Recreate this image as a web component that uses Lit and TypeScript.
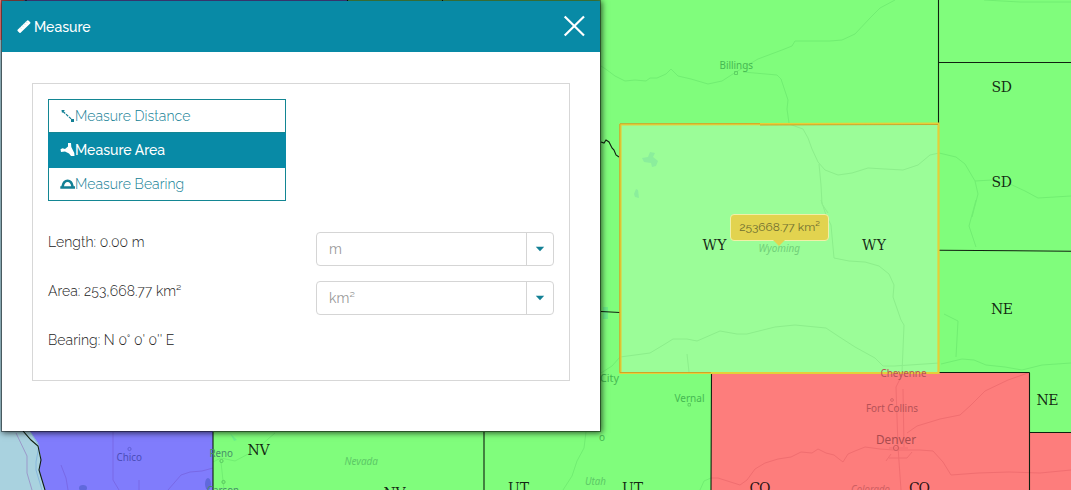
import { LitElement, html, css, svg } from "lit";
import { customElement } from "lit/decorators.js";

type Label = [text: string, x: number, y: number, width: number];

const STATES: Label[] = [
  ["SD", 991.5, 92, 20.5], ["SD", 991.5, 186.5, 20.5], ["WY", 702.5, 250.3, 24], ["WY", 862, 250.3, 24],
  ["NE", 991, 314, 22], ["NE", 1036.5, 405.3, 22], ["NV", 247.5, 455.3, 22], ["NV", 383.5, 498, 22],
  ["UT", 508, 492.5, 21], ["UT", 622, 492.5, 21], ["CO", 749.5, 493, 21], ["CO", 909, 493, 21],
];

@customElement("map-canvas")
export class MapCanvas extends LitElement {
  static styles = css`
    :host { display: block; }
    svg { display: block; }
    .state { font: 14px "DejaVu Serif", serif; fill: #000; fill-opacity: .85; }
    .town { font-family: "Noto Sans", sans-serif; font-size: 11px; }
    .green { fill: #46b852; }
    .blue { fill: #4a4cb8; }
    .red { fill: #b65257; }
    .mixed { fill: #458f68; }
    .region { font-style: italic; font-size: 10px; fill: #5cc966; }
    .region-light { fill: #72cf78; }
    .region-red { fill: #cf5f63; }
    .big { font-size: 12.5px; fill: #a94b4f; }
    .road { fill: none; stroke: #71ee72; stroke-width: 1; }
    .road-light { fill: none; stroke: #8cee8b; stroke-width: 1; }
    .road-red { fill: none; stroke: #f06e70; stroke-width: 1; }
    .road-blue { fill: none; stroke: #7869e6; stroke-width: 1; }
    .edge { fill: none; stroke: #102010; stroke-width: 1.1; }
  `;

  private town(cls: string, [t, x, y, w]: Label) {
    return svg`<text class="town ${cls}" x=${x} y=${y} textLength=${w} lengthAdjust="spacingAndGlyphs">${t}</text>`;
  }

  render() {
    return html`<svg width="1071" height="490" viewBox="0 0 1071 490">
      <rect width="1071" height="490" fill="#80fd7c" />
      <rect width="348" height="40" fill="#807cfc" />
      <rect width="24" height="40" fill="#fd7d7c" />
      <path d="M0 40H30V420H0Z" fill="#a9d2df" />
      <path d="M0 420H213V490H0Z" fill="#807cfc" />
      <path d="M0 420H24L31 433L38 443L41 458L39 470L45 490H0Z" fill="#a9d2df" />
      <path d="M711.5 373H1029.5V432.5H1071V490H711Z" fill="#fd7d7c" />
      <rect x="620" y="124" width="319" height="249" fill="#9bfd98" />

      <path class="road" d="M601 66L607 70L615 76L625 81L635 80L646 81L650 78L657 78L666 74L671 69L678 76L691 79L708 84L722 81L736 72L758 59L782 50L792 46L795 41H830L842 40L855 34L870 18L880 8L895 0M743 72L777 75L781 79L785 91L788 100L787 109L789 123M939 153L956 157L965 164L975 181L992 180L1010 184L1025 191L1038 198L1071 196M975 181L978 194L972 217M976 200L969 226L976 247M601 373L612 366L620 357M941 364L962 359L974 360L986 365L1005 367L1022 370L1042 365L1071 363M944 314L958 321L956 357M586 432L584 448L577 461L572 476L563 490M711 478L704 481L700 490M213 462L221 458L235 461L250 453L260 446L275 433M221 462L224 490M984 0L1020 2H1071" />
      <path class="road-light" d="M789 124L803 129L808 138L812 149L818 162L825 170L838 175L852 173L868 168L885 169L903 170L918 165L930 155L939 153M819 164L821 185L822 204L828 213M821 200L826 215L831 225L834 258L849 261L865 262L879 266L889 274L894 285L893 297L901 320L904 325L902 373M620 357L650 353L665 344L673 339H687L697 341L720 331L737 334H747L775 327L795 325L826 328L838 336L855 347L875 358L883 366L895 366L939 363M687 354L689 372" />
      <path class="road-red" d="M903 373L896 387L898 447L901 490M903 389L904 447M907 433L917 426L940 419L960 415L971 405L985 391L1008 380L1028 373M711 478L718 478L740 485L747 480L755 469L765 463L778 459L791 457L801 452L812 453L818 449L826 453L834 455L839 459L843 462L848 454L855 451L865 447L880 449L894 450H920L933 451L943 462L951 475L978 473L1009 472L1040 473L1071 470M886 461L891 454M889 458H907L912 452M889 448H908" />
      <path class="road-blue" d="M113 432V480L119 490M61 465L66 478L68 490M168 490L181 475L190 472L202 471L213 468M139 480V490" />
      <path d="M16 433L27 456V473L32 490" fill="none" stroke="#9b99ca" />
      <path d="M31 433L39 446L36 462L36 470L42 490" fill="none" stroke="#88b8dd" />
      <path d="M642 158L648 157L650 152L655 153L653 157L658 161L656 166L652 167L651 163L644 162ZM636 189L638 190L639 198L635 197L634 194Z" fill="#8bee9c" />
      <ellipse cx="83" cy="488" rx="4" ry="3" fill="#6069dc" /><ellipse cx="208" cy="484" rx="3" ry="6" fill="#6069dc" />
      <path d="M603 307H608V319H603ZM230 433L237 440L234 441Z" fill="#6cef88" />

      <path class="edge" d="M938.5 0V124M939 62.5H1071M939 250.2L1071 251.2M939 372.5H1029.5M711.5 373L711 490M601 142L604 143L606 140L609 142L612 148L614 150L616 155L619 157M601 311.5L620 312.5M484 432V490M213 432V490M23 431L31 440L38 446L41 460L39 470L45 490M347.5 0V10M442.5 0V2M26 0V2" />
      <path class="edge" d="M1029.5 372.5V490M1030 432.5H1071" />
      <path d="M620.5 124.5L938.5 123.5V373H620.5Z" fill="none" stroke="#e5cf38" stroke-width="2.2" />
      <path d="M620 123.7H760M760 125L938 124.5M619.8 124V372.5H711" fill="none" stroke="#c98f20" stroke-width=".7" />

      ${this.town("green", ["Billings", 719.5, 69, 33.5])}
      ${this.town("green", ["City", 600, 382, 19])}
      ${this.town("green", ["Vernal", 674.5, 402, 30])}
      ${this.town("green", ["o", 599, 441, 6])}
      ${this.town("mixed", ["Reno", 209.5, 457, 23.5])}
      ${this.town("mixed", ["Carson", 207, 494, 32])}
      ${this.town("blue", ["Chico", 116.5, 461, 25.5])}
      ${this.town("red", ["Cheyenne", 880.5, 376.5, 46])}
      ${this.town("red", ["Fort Collins", 866, 412, 52])}
      ${this.town("big", ["Denver", 876, 443.5, 40])}
      ${this.town("region region-light", ["Wyoming", 758.5, 252, 41.5])}
      ${this.town("region", ["Nevada", 344.5, 464.5, 33.5])}
      ${this.town("region", ["Utah", 585, 485, 21])}
      ${this.town("region region-red", ["Colorado", 851, 493, 39])}
      <g fill="none" stroke-width=".9">
        <path d="M734.5 71.5H737.5V74.5H734.5ZM688 403.5H690.5V406H688Z" stroke="#5acd60" />
        <circle cx="129.5" cy="449" r="1.6" stroke="#5c5bd0" />
        <circle cx="221.5" cy="461" r="1.6" stroke="#55c25c" /><circle cx="223.5" cy="482" r="1.6" stroke="#55c25c" />
        <circle cx="892" cy="400" r="1.4" stroke="#d56064" /><circle cx="896" cy="448" r="2.6" stroke="#c9595d" />
      </g>
      ${STATES.map(([t, x, y, w]) => svg`<text class="state" x=${x} y=${y} textLength=${w}>${t}</text>`)}
    </svg>`;
  }
}

@customElement("measure-dialog")
export class MeasureDialog extends LitElement {
  static styles = css`
    :host { display: block; box-sizing: border-box; width: 600px; height: 432px; background: #fff;
      background-clip: padding-box; border: 1px solid rgba(0,0,0,.4); box-shadow: 1px 1px 6px rgba(0,0,0,.65);
      font: 300 14px/20px Raleway, Lato, sans-serif; color: #222; }
    .head { height: 51px; background: #088aa6; color: #fff; display: flex; align-items: center; padding: 0 15px; }
    .title { font-weight: 500; margin-left: 2px; flex: 1; }
    .close { display: block; position: relative; top: -1px; }
    .panel { margin: 31px 30px 0; height: 298px; box-sizing: border-box; border: 1px solid #d7d7d7; padding: 15px; }
    .modes { width: 238px; }
    .mode { box-sizing: border-box; height: 34px; border: 1px solid #138693; color: #138095; display: flex;
      align-items: center; padding-left: 11px; letter-spacing: .06px; }
    .mode + .mode { border-top: 0; }
    .on { position: relative; background: #088aa6; border-color: #088aa6; color: #fff; font-weight: 500;
      letter-spacing: 0; box-shadow: 0 1px #088aa6; }
    .mode svg { display: block; flex: none; }
    .rows { margin-top: 31px; display: grid; grid-template-columns: 268px 238px; row-gap: 15px; letter-spacing: .06px; }
    .value { height: 34px; line-height: 20px; }
    .select { box-sizing: border-box; height: 34px; border: 1px solid #d5d5d5; border-radius: 4px; display: flex;
      color: #999; font-weight: 400; }
    .unit { flex: 1; padding-left: 12px; line-height: 33px; }
    .drop { width: 26px; border-left: 1px solid #d5d5d5; display: flex; align-items: center; justify-content: center; }
    .lbl { white-space: nowrap; }
  `;

  private select(unit: string) {
    return html`<div class="select"><span class="unit">${unit}</span><span class="drop">
      <svg width="10" height="6" viewBox="0 0 10 6"><path d="M.8 .7H9.2L5 5.3Z" fill="#138095" /></svg></span></div>`;
  }

  render() {
    return html`
      <div class="head">
        <svg width="15" height="15" viewBox="0 0 15 15"><path d="M.6 10.8L10.2 1.4Q10.8 1 11.4 1.5L13.3 3.3Q13.7 3.9 13.2 4.5L3.6 13.8Q3 14.3 2.4 13.7L.6 11.9Q.2 11.4 .6 10.8Z" fill="#fff" /><path d="M3 8.3L4.4 9.7M5 6.4L6.4 7.8M7 4.5L8.4 5.9M9 2.6L10.4 4" stroke="#8cc9d6" stroke-width=".6" /></svg>
        <span class="title">Measure</span>
        <svg class="close" width="22" height="22" viewBox="0 0 22 22"><path d="M1.7 1.5L21 20.5M21 1.5L1.7 20.5" stroke="#fff" stroke-width="2.2" /></svg>
      </div>
      <div class="panel">
        <div class="modes">
          <div class="mode"><svg width="15" height="16" viewBox="0 0 15 16"><path d="M3 3.5L13 12.5" stroke="#138095" stroke-width="1.2" stroke-dasharray="3 1" /><path d="M1.5 2H5L2 5ZM11 11H14V14H11Z" fill="#138095" /></svg><span class="lbl">Measure Distance</span></div>
          <div class="mode on"><svg width="15" height="16" viewBox="0 0 15 16"><path d="M8 1H11L11.3 5L14.3 11L14.5 14H11L9 11.5L5 9.5L1 10L.5 7.3L2.5 6.3L5 7L8 4.5Z" fill="#fff" /></svg><span class="lbl">Measure Area</span></div>
          <div class="mode"><svg width="15" height="16" viewBox="0 0 15 16"><path fill-rule="evenodd" d="M.3 12.8V10.2H1.3Q2.5 3.7 7.6 3.5Q12.7 3.7 13.8 10.2H15V12.8ZM4 10.2H11.2Q10.6 6.3 7.6 6.1Q4.6 6.3 4 10.2Z" fill="#138095" /></svg><span class="lbl">Measure Bearing</span></div>
        </div>
        <div class="rows">
          <div class="value"><span class="lbl">Length: 0.00 m</span></div>${this.select("m")}
          <div class="value"><span class="lbl">Area: 253,668.77 km²</span></div>${this.select("km²")}
          <div class="value"><span class="lbl">Bearing: N 0° 0' 0'' E</span></div>
        </div>
      </div>`;
  }
}

@customElement("app-root")
export class AppRoot extends LitElement {
  static styles = css`
    :host { display: block; position: relative; width: 1071px; height: 490px; overflow: hidden; }
    .dialog { position: absolute; left: 1px; top: 0; }
    .tip { position: absolute; left: 730px; top: 214px; width: 99px; height: 27px; box-sizing: border-box;
      border: 1px solid #f0f0a8; border-radius: 4px; background: #e2d34f; color: #6f6e31;
      font: 400 12px/24px Raleway, Lato, sans-serif; text-align: center; }
    .tip::after { content: ""; position: absolute; left: 42px; top: 25px; border: 6px solid transparent;
      border-top-color: #e2d34f; border-bottom: 0; }
  `;
  render() {
    return html`<map-canvas></map-canvas>
      <div class="tip">253668.77 km²</div>
      <measure-dialog class="dialog"></measure-dialog>`;
  }
}
